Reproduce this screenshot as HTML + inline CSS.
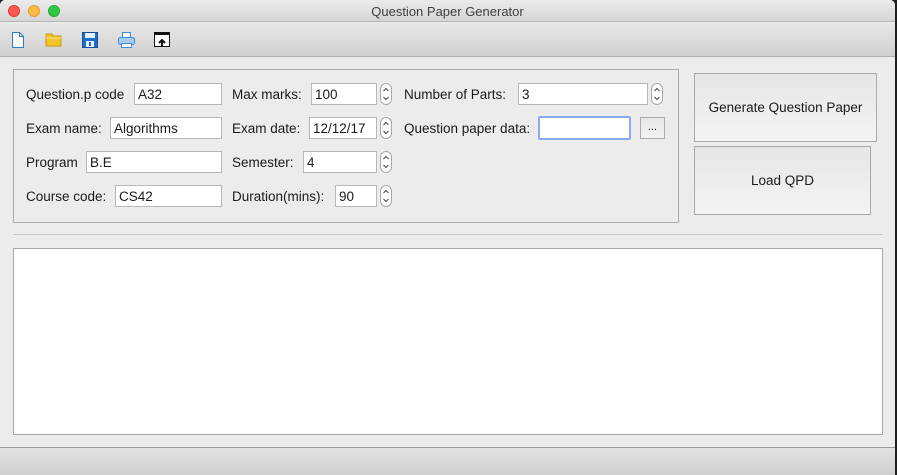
<!DOCTYPE html>
<html><head><meta charset="utf-8"><style>
*{box-sizing:border-box;margin:0;padding:0}
body{width:897px;height:475px;overflow:hidden;background:#1e1e1e;font-family:"Liberation Sans",sans-serif;font-size:13.5px;color:#1a1a1a;position:relative}
.a{position:absolute}
#win{left:0;top:0;width:895px;height:475px;background:#ececec;border-radius:5px 5px 0 0;overflow:hidden}
#title{left:0;top:0;width:895px;height:22px;background:linear-gradient(#ebebeb,#d5d5d5);border-bottom:1px solid #b5b5b5;text-align:center;line-height:23px;color:#404040;font-size:13px}
.dot{top:5px;width:12px;height:12px;border-radius:50%}
#tb{left:0;top:23px;width:895px;height:34px;background:linear-gradient(#e8e8e8,#d0d0d0);border-bottom:1px solid #b0b0b0}
.lbl{line-height:16px}
.in{background:#fff;border:1px solid #b8b8b8;height:22px;line-height:21px;padding-left:3px}
.sp{width:12px;height:22px;border:1px solid #aaa;border-radius:6px;background:#fff}
.btn{border:1px solid #aaa;background:linear-gradient(#e6e6e6,#f4f4f4);text-align:center}
</style></head><body>
<div id="win" class="a">
<div id="title" class="a">Question Paper Generator</div>
<div class="a dot" style="left:8px;background:#fc5753;border:1px solid #df3d39"></div>
<div class="a dot" style="left:28px;background:#fdbc40;border:1px solid #de9f34"></div>
<div class="a dot" style="left:48px;background:#33c748;border:1px solid #27aa35"></div>
<div id="tb" class="a">
<svg class="a" style="left:0;top:0" width="200" height="34">
<path d="M12.5 9.5h7l4 4v11h-11z" fill="#fff" stroke="#2a7ad0"/><path d="M19.5 9.5v4h4" fill="none" stroke="#2a7ad0"/>
<path d="M46 11h6l1 2h8v10h-15z" fill="#f3c42a" stroke="#c89a10"/><path d="M46 15h15" stroke="#fbe08a"/>
<rect x="82.5" y="9.5" width="15" height="15" fill="#1d6fc9" stroke="#0e4f9a"/><rect x="85" y="10" width="10" height="5" fill="#e8f0fa"/><rect x="86" y="18" width="8" height="6" fill="#e8f0fa"/><rect x="89" y="19" width="2" height="4" fill="#1d6fc9"/>
<rect x="122.5" y="9.5" width="8" height="5" fill="#fff" stroke="#3c8ad8"/><rect x="118.5" y="14.5" width="16" height="7" rx="2" fill="#a9cdf0" stroke="#3c8ad8"/><rect x="121.5" y="20.5" width="10" height="4" fill="#fff" stroke="#3c8ad8"/>
<rect x="154.5" y="9.5" width="15" height="14" fill="#fff" stroke="#111"/><rect x="154" y="9" width="16" height="3" fill="#111"/><path d="M162 24v-6M159 20l3-3 3 3" stroke="#111" stroke-width="2" fill="none"/>
</svg>
</div>
<svg class="a" style="left:0;top:0" width="897" height="230">
<defs><g id="s"><rect x="0.5" y="0.5" width="11" height="21" rx="5.5" fill="#fff" stroke="#a8a8a8"/><path d="M3.5 8l2.5-2.5 2.5 2.5M3.5 14l2.5 2.5 2.5-2.5" fill="none" stroke="#444"/></g></defs>
<use href="#s" x="380" y="83"/><use href="#s" x="380" y="117"/><use href="#s" x="380" y="151"/><use href="#s" x="380" y="185"/><use href="#s" x="651" y="83"/>
</svg>
<div class="a" style="left:13px;top:69px;width:666px;height:154px;border:1px solid #acacac"></div>
<div class="a lbl" style="left:26px;top:87px">Question.p code</div>
<div class="a in" style="left:134px;top:83px;width:88px">A32</div>
<div class="a lbl" style="left:26px;top:121px">Exam name:</div>
<div class="a in" style="left:110px;top:117px;width:112px">Algorithms</div>
<div class="a lbl" style="left:26px;top:155px">Program</div>
<div class="a in" style="left:86px;top:151px;width:136px">B.E</div>
<div class="a lbl" style="left:26px;top:189px">Course code:</div>
<div class="a in" style="left:115px;top:185px;width:107px">CS42</div>
<div class="a lbl" style="left:232px;top:87px">Max marks:</div>
<div class="a in" style="left:311px;top:83px;width:66px">100</div>
<div class="a lbl" style="left:232px;top:121px">Exam date:</div>
<div class="a in" style="left:309px;top:117px;width:68px">12/12/17</div>
<div class="a lbl" style="left:232px;top:155px">Semester:</div>
<div class="a in" style="left:303px;top:151px;width:74px">4</div>
<div class="a lbl" style="left:232px;top:189px">Duration(mins):</div>
<div class="a in" style="left:335px;top:185px;width:42px">90</div>
<div class="a lbl" style="left:404px;top:87px">Number of Parts:</div>
<div class="a in" style="left:518px;top:83px;width:130px">3</div>
<div class="a lbl" style="left:404px;top:121px">Question paper data:</div>
<div class="a in" style="left:538px;top:116px;width:93px;height:24px;border:2px solid #8aa8ec;border-radius:2px"></div>
<div class="a btn" style="left:640px;top:117px;width:25px;height:22px;line-height:18px;font-size:11px">...</div>
<div class="a btn" style="left:694px;top:73px;width:183px;height:69px;line-height:67px">Generate Question Paper</div>
<div class="a btn" style="left:694px;top:146px;width:177px;height:69px;line-height:67px">Load QPD</div>
<div class="a" style="left:13px;top:234px;width:870px;height:1px;background:#c8c8c8"></div>
<div class="a" style="left:13px;top:248px;width:870px;height:187px;background:#fff;border:1px solid #a8a8a8"></div>
<div class="a" style="left:0;top:447px;width:895px;height:28px;background:linear-gradient(#e2e2e2,#cfcfcf);border-top:1px solid #9a9a9a"></div>
</div>
</body></html>
